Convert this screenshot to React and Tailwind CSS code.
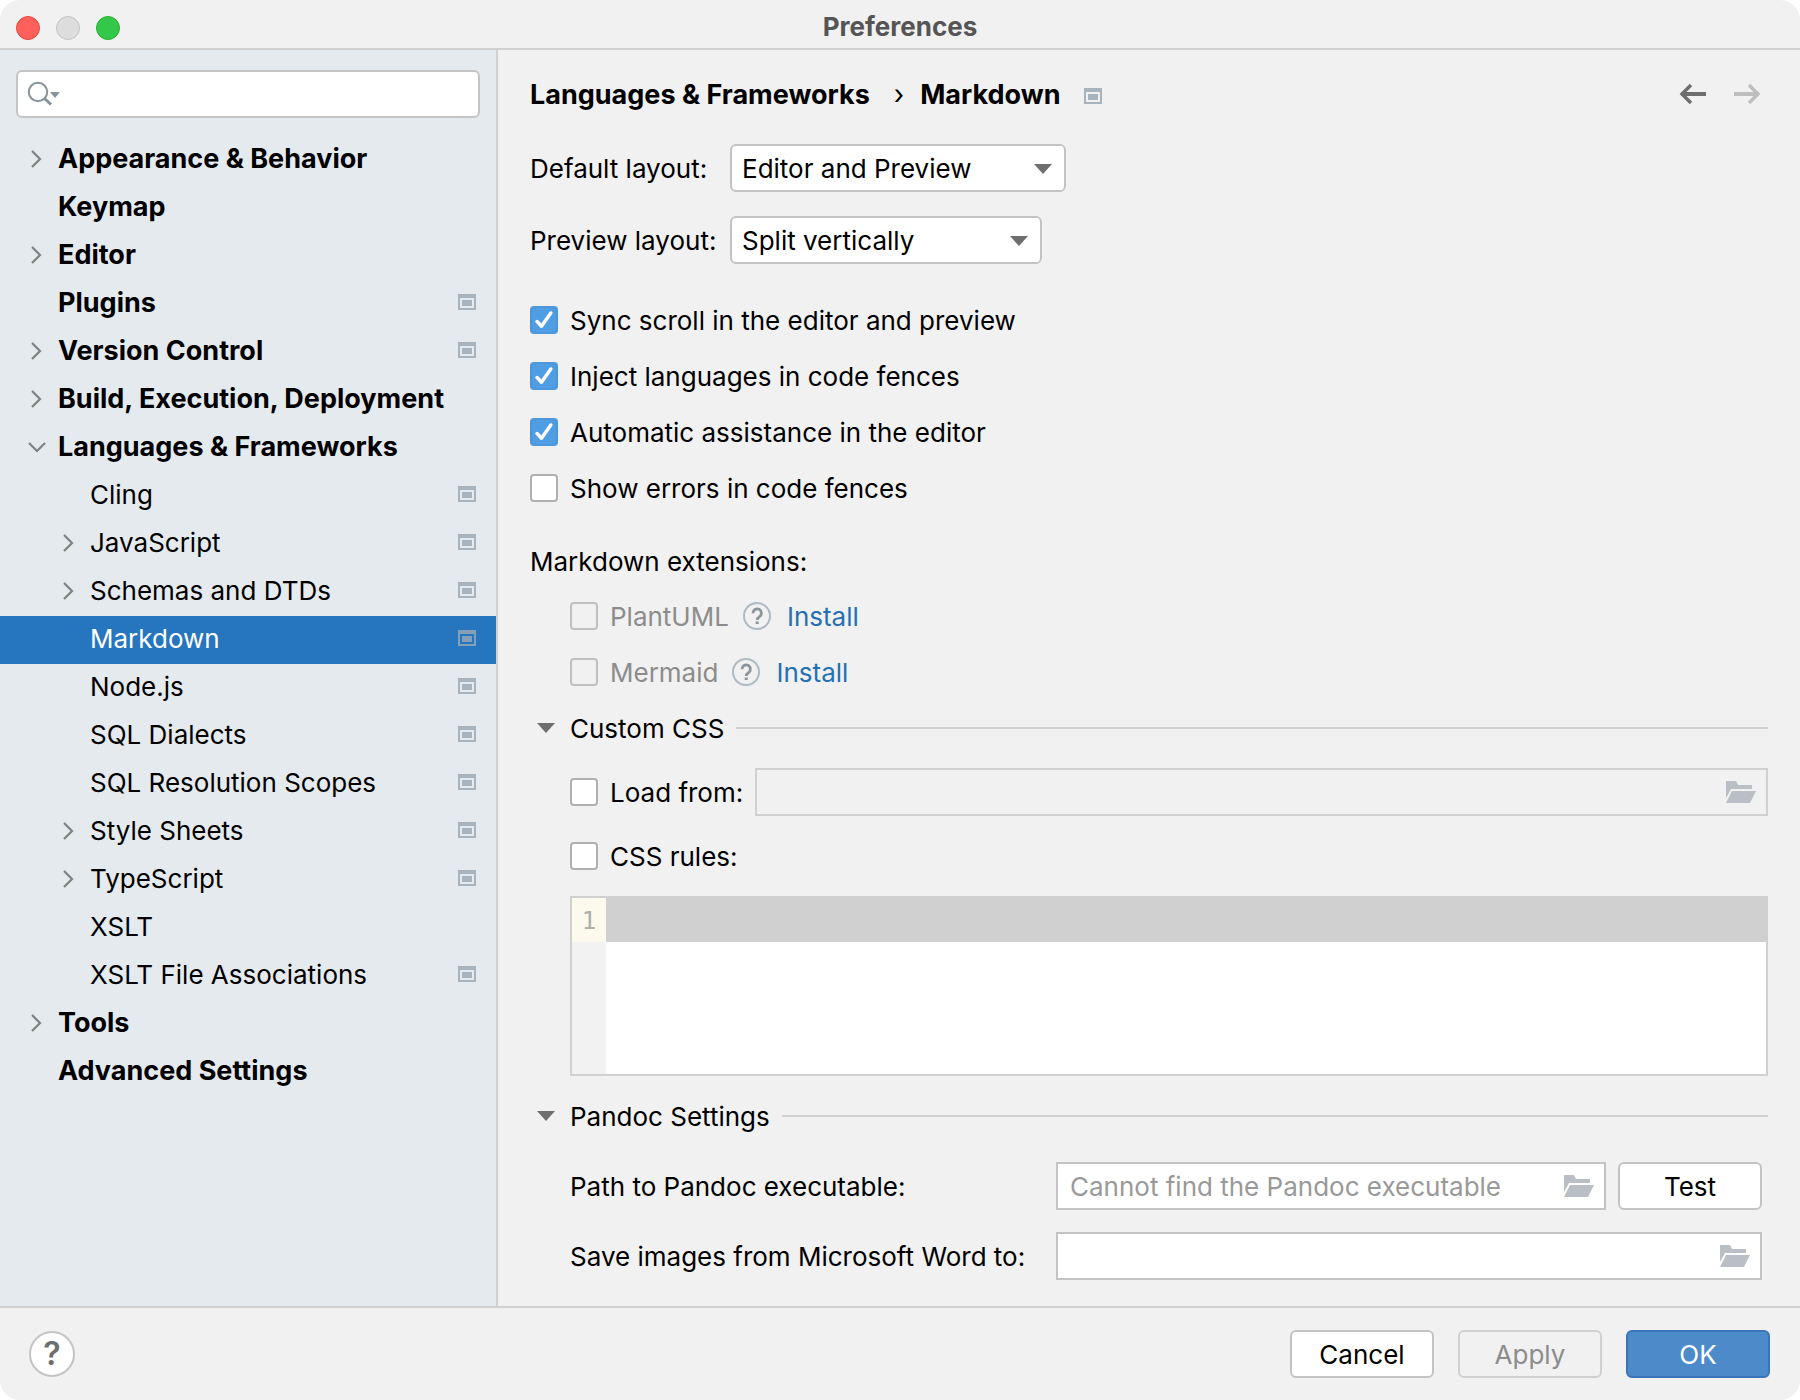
import { useState } from "react";

const TREE = [
  { label: "Appearance & Behavior", level: 0, arrow: "right" },
  { label: "Keymap", level: 0 },
  { label: "Editor", level: 0, arrow: "right" },
  { label: "Plugins", level: 0, project: true },
  { label: "Version Control", level: 0, arrow: "right", project: true },
  { label: "Build, Execution, Deployment", level: 0, arrow: "right" },
  { label: "Languages & Frameworks", level: 0, arrow: "down" },
  { label: "Cling", level: 1, project: true },
  { label: "JavaScript", level: 1, arrow: "right", project: true },
  { label: "Schemas and DTDs", level: 1, arrow: "right", project: true },
  { label: "Markdown", level: 1, project: true },
  { label: "Node.js", level: 1, project: true },
  { label: "SQL Dialects", level: 1, project: true },
  { label: "SQL Resolution Scopes", level: 1, project: true },
  { label: "Style Sheets", level: 1, arrow: "right", project: true },
  { label: "TypeScript", level: 1, arrow: "right", project: true },
  { label: "XSLT", level: 1 },
  { label: "XSLT File Associations", level: 1, project: true },
  { label: "Tools", level: 0, arrow: "right" },
  { label: "Advanced Settings", level: 0 },
];

export default function App() {
  const [selected, setSelected] = useState("Markdown");

  return (
    <div className="min-h-screen bg-white font-['Inter','Liberation_Sans',sans-serif] text-[26px] leading-8 text-black">
      <div className="flex min-h-screen flex-col overflow-hidden rounded-[20px] bg-[#f1f1f1]">
        <TitleBar />
        <div className="flex flex-1">
          <Sidebar selected={selected} onSelect={setSelected} />
          <MarkdownSettings />
        </div>
        <Footer />
      </div>
    </div>
  );
}

function TitleBar() {
  return (
    <header className="grid h-[50px] grid-cols-[1fr_auto_1fr] items-center border-b-2 border-[#d0d0d0] px-4">
      <div className="flex gap-4 pt-2">
        <button type="button" aria-label="Close" className="h-6 w-6 rounded-full border border-[#e24b41] bg-[#ff605c]" />
        <button type="button" aria-label="Minimize" className="h-6 w-6 rounded-full border border-[#c3c3c3] bg-[#dddddd]" />
        <button type="button" aria-label="Zoom" className="h-6 w-6 rounded-full border border-[#2dac2f] bg-[#34c84a]" />
      </div>
      <h1 className="pt-1.5 font-bold text-[#555555]">Preferences</h1>
    </header>
  );
}

function Sidebar({ selected, onSelect }) {
  return (
    <aside className="w-[498px] shrink-0 border-r-2 border-[#d0d0d0] bg-[#e5eaee]">
      <div className="px-4 pt-5">
        <label className="flex h-12 items-center rounded-md border-2 border-[#c4c4c4] bg-white pl-2">
          <SearchIcon />
          <input type="text" aria-label="Search settings" className="min-w-0 flex-1 bg-transparent px-2 outline-none" />
        </label>
      </div>
      <ul className="mt-[18px]">
        {TREE.map((item) => (
          <TreeRow
            key={item.label}
            item={item}
            active={item.label === selected}
            onSelect={() => onSelect(item.label)}
          />
        ))}
      </ul>
    </aside>
  );
}

function TreeRow({ item, active, onSelect }) {
  return (
    <li>
      <button
        type="button"
        onClick={onSelect}
        className={`flex h-12 w-full items-center pr-5 text-left ${
          item.level === 0 ? "pl-6 text-[27px] font-bold" : "pl-14"
        } ${active ? "bg-[#2675bf] text-white" : ""}`}
      >
        <span className="flex w-[34px] shrink-0 pb-0.5">{item.arrow ? <TreeArrow direction={item.arrow} /> : null}</span>
        <span className="flex-1 whitespace-nowrap pb-0.5">{item.label}</span>
        {item.project ? <ProjectIcon className={`mb-1 ${active ? "text-[#879fb5]" : "text-[#a7b4bd]"}`} /> : null}
      </button>
    </li>
  );
}

function MarkdownSettings() {
  return (
    <main className="min-w-0 flex-1 px-8 pb-[26px] pt-[26px]">
      <div className="flex h-9 items-center justify-between">
        <h2 className="flex items-center pt-0.5 text-[27px] font-bold">
          <span>Languages &amp; Frameworks</span>
          <span className="pl-6 pr-4 font-normal">›</span>
          <span>Markdown</span>
          <ProjectIcon className="ml-6 mt-0.5 text-[#a7b4bd]" />
        </h2>
        <nav className="flex gap-6 pr-1.5">
          <button type="button" aria-label="Back" className="text-[#6e6e6e]">
            <ArrowIcon />
          </button>
          <button type="button" aria-label="Forward" disabled className="rotate-180 text-[#bebebe]">
            <ArrowIcon />
          </button>
        </nav>
      </div>

      <div className="mt-8 grid grid-cols-[200px_1fr] items-center gap-y-6">
        <label htmlFor="default-layout" className="pt-0.5">
          Default layout:
        </label>
        <Dropdown id="default-layout" width="w-[336px]" options={["Editor and Preview", "Editor", "Preview"]} />
        <label htmlFor="preview-layout" className="pt-0.5">
          Preview layout:
        </label>
        <Dropdown id="preview-layout" width="w-[312px]" options={["Split vertically", "Split horizontally"]} />
      </div>

      <div className="mt-10 flex flex-col gap-6">
        <Checkbox label="Sync scroll in the editor and preview" defaultChecked />
        <Checkbox label="Inject languages in code fences" defaultChecked />
        <Checkbox label="Automatic assistance in the editor" defaultChecked />
        <Checkbox label="Show errors in code fences" />
      </div>

      <p className="mt-10 pt-0.5">Markdown extensions:</p>
      <div className="mt-[22px] flex flex-col gap-6 pl-10">
        <Extension name="PlantUML" />
        <Extension name="Mermaid" />
      </div>

      <SectionHeader title="Custom CSS" className="mt-6" />
      <div className="pl-10">
        <div className="mt-6 flex items-center gap-3">
          <Checkbox label="Load from:" />
          <PathField label="Stylesheet path" disabled />
        </div>
        <div className="mt-6">
          <Checkbox label="CSS rules:" />
        </div>
        <div className="mt-6 flex h-[180px] border-2 border-[#d0d0d0] bg-white">
          <div className="w-[34px] shrink-0 bg-[#f2f2f2]">
            <div className="flex h-11 items-center justify-center bg-[#fcfaed] pt-0.5 font-['DejaVu_Sans_Mono',monospace] text-[24px] text-[#adadad]">
              1
            </div>
          </div>
          <textarea
            aria-label="CSS rules"
            className="flex-1 resize-none bg-linear-to-b from-[#d0d0d0] from-[44px] to-white to-[44px] px-1 outline-none"
          />
        </div>
      </div>

      <SectionHeader title="Pandoc Settings" className="mt-6" />
      <div className="mt-[30px] grid grid-cols-[486px_1fr] items-center gap-y-[22px] pl-10 pr-1.5">
        <label htmlFor="pandoc-path" className="pt-0.5">
          Path to Pandoc executable:
        </label>
        <div className="flex gap-3">
          <PathField id="pandoc-path" placeholder="Cannot find the Pandoc executable" />
          <Button>Test</Button>
        </div>
        <label htmlFor="pandoc-images" className="pt-0.5">
          Save images from Microsoft Word to:
        </label>
        <PathField id="pandoc-images" />
      </div>
    </main>
  );
}

function Dropdown({ id, width, options }) {
  return (
    <div className={`relative ${width}`}>
      <select
        id={id}
        className="h-12 w-full appearance-none rounded-md border-2 border-[#c4c4c4] bg-white pl-2.5 pr-12 pt-0.5 outline-none"
      >
        {options.map((option) => (
          <option key={option}>{option}</option>
        ))}
      </select>
      <TriangleIcon className="pointer-events-none absolute right-3.5 top-5" />
    </div>
  );
}

function Checkbox({ label, ...props }) {
  return (
    <label className={`flex h-8 w-fit shrink-0 items-center gap-3 ${props.disabled ? "text-[#8c8c8c]" : ""}`}>
      <span className="grid h-7 w-7 shrink-0">
        <input
          type="checkbox"
          className="peer col-start-1 row-start-1 h-7 w-7 appearance-none rounded border-2 border-[#b0b0b0] bg-white checked:border-[#4b97d9] checked:bg-[#4f9ee3] disabled:border-[#c0c0c0] disabled:bg-transparent"
          {...props}
        />
        <svg
          viewBox="0 0 28 28"
          className="pointer-events-none invisible col-start-1 row-start-1 h-7 w-7 peer-checked:visible"
        >
          <path d="M7 15.500l4.500 4.700L20.800 7" fill="none" stroke="white" strokeWidth="3.400" strokeLinecap="round" strokeLinejoin="round" />
        </svg>
      </span>
      <span className="whitespace-nowrap pt-0.5">{label}</span>
    </label>
  );
}

function Extension({ name }) {
  return (
    <div className="flex h-8 items-center">
      <Checkbox label={name} disabled />
      <button type="button" aria-label={`About ${name}`} className="ml-3.5 mr-4">
        <HelpIcon />
      </button>
      <a href="#install" className="pt-0.5 text-[#2470b3]">
        Install
      </a>
    </div>
  );
}

function SectionHeader({ title, className }) {
  return (
    <div className={`flex h-8 items-center ${className}`}>
      <button type="button" className="flex items-center gap-[15px] pl-[7px]">
        <TriangleIcon />
        <span className="pt-0.5">{title}</span>
      </button>
      <span className="ml-3 h-0.5 flex-1 bg-[#d0d0d0]" />
    </div>
  );
}

function PathField({ label, disabled, ...props }) {
  return (
    <div
      className={`flex h-12 min-w-0 flex-1 items-center border-2 pl-3 pr-2.5 ${
        disabled ? "border-[#d0d0d0]" : "border-[#c4c4c4] bg-white"
      }`}
    >
      <input
        type="text"
        aria-label={label}
        disabled={disabled}
        className="min-w-0 flex-1 bg-transparent pt-0.5 outline-none placeholder:text-[#999999]"
        {...props}
      />
      <button type="button" aria-label="Browse" disabled={disabled}>
        <FolderIcon />
      </button>
    </div>
  );
}

function Button({ variant = "default", children }) {
  const styles = {
    default: "border-[#c4c4c4] bg-white",
    disabled: "border-[#d0d0d0] text-[#8c8c8c]",
    primary: "border-[#3a75b8] bg-[#4d8ac9] text-white",
  };
  return (
    <button
      type="button"
      disabled={variant === "disabled"}
      className={`h-12 w-36 shrink-0 rounded-md border-2 pt-0.5 ${styles[variant]}`}
    >
      {children}
    </button>
  );
}

function Footer() {
  return (
    <footer className="flex h-[94px] items-center justify-between border-t-2 border-[#d0d0d0] pl-[29px] pr-[30px]">
      <button
        type="button"
        aria-label="Help"
        className="flex h-[46px] w-[46px] items-center justify-center rounded-full border-2 border-[#c4c4c4] bg-white text-[32px] font-semibold text-[#6e6e6e]"
      >
        ?
      </button>
      <div className="flex gap-6">
        <Button>Cancel</Button>
        <Button variant="disabled">Apply</Button>
        <Button variant="primary">OK</Button>
      </div>
    </footer>
  );
}

function SearchIcon() {
  return (
    <svg width="36" height="28" viewBox="0 0 36 28" className="shrink-0">
      <circle cx="12" cy="12" r="9.200" fill="none" stroke="#87939a" strokeWidth="2" />
      <path d="M18.500 18.500l6.500 6" stroke="#87939a" strokeWidth="3" />
      <path d="M24 12h10l-5 6z" fill="#87939a" />
    </svg>
  );
}

function TreeArrow({ direction }) {
  return (
    <svg width="24" height="20" viewBox="0 0 24 20" fill="none" stroke="#808080" strokeWidth="2.200">
      <path d={direction === "down" ? "M5 6l8 8 8-8" : "M8 2l8 8-8 8"} />
    </svg>
  );
}

function TriangleIcon({ className = "" }) {
  return (
    <svg width="18" height="10" viewBox="0 0 18 10" className={className}>
      <path d="M0 0h18l-9 10z" fill="#6e6e6e" />
    </svg>
  );
}

function ProjectIcon({ className }) {
  return (
    <svg width="18" height="16" viewBox="0 0 18 16" fill="currentColor" className={`shrink-0 ${className}`}>
      <path fillRule="evenodd" d="M0 0h18v16H0zM2 4v10h14V4z" />
      <path d="M4 6h10v6H4z" />
    </svg>
  );
}

function ArrowIcon() {
  return (
    <svg width="30" height="22" viewBox="0 0 30 22" fill="none" stroke="currentColor">
      <path d="M3 11h25" strokeWidth="4" />
      <path d="M13 2l-9 9 9 9" strokeWidth="3.400" />
    </svg>
  );
}

function FolderIcon() {
  return (
    <svg width="30" height="22" viewBox="0 0 30 22" fill="#b9bfc4">
      <path d="M0 0h10l2 4h14v4H5L0 17z" />
      <path d="M6 10h24l-6 12H0z" />
    </svg>
  );
}

function HelpIcon() {
  return (
    <svg width="28" height="28" viewBox="0 0 28 28" fill="none">
      <circle cx="14" cy="14" r="13" stroke="#afbac1" strokeWidth="2" />
      <path d="M10 11.200a4.200 4.200 0 1 1 6.500 3.400c-1.600 1.100-2.300 1.600-2.300 3.400" stroke="#8a959c" strokeWidth="2.800" />
      <path d="M12.700 19.500h3v2.500h-3z" fill="#8a959c" />
    </svg>
  );
}
